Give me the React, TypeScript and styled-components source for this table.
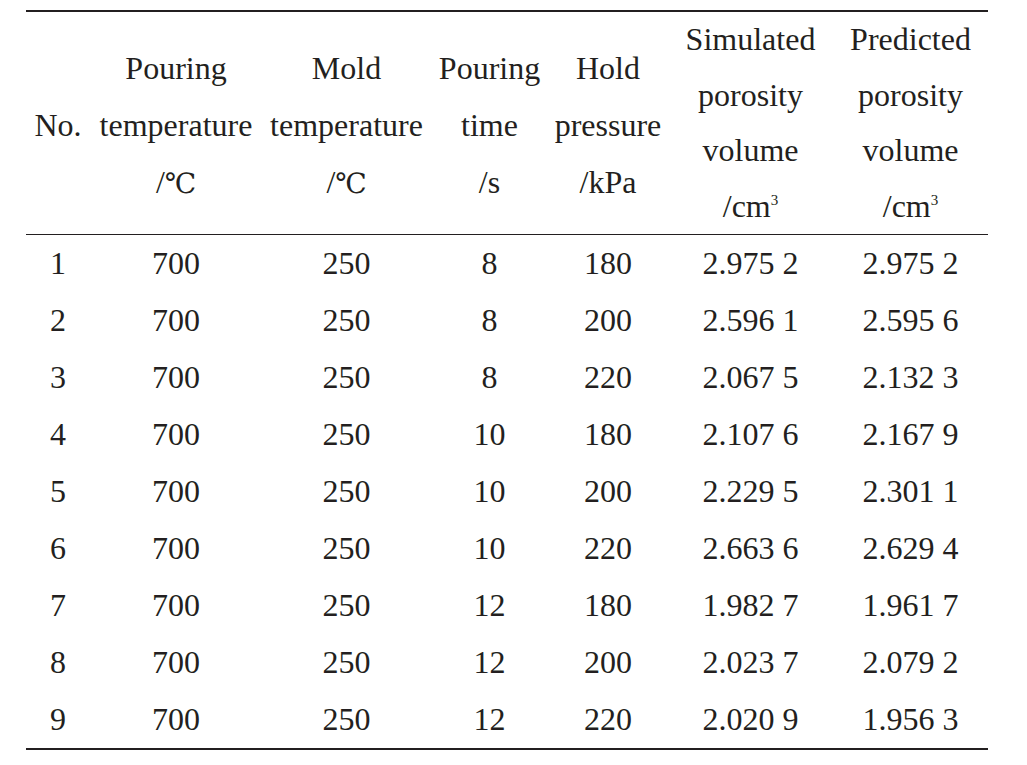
import React from 'react';
import styled, { createGlobalStyle } from 'styled-components';

const GlobalStyle = createGlobalStyle`
  body {
    margin: 0;
    background: #fff;
    color: #231f20;
    font-family: "Liberation Serif", "Times New Roman", serif;
  }
`;

const Page = styled.div`
  padding: 10px 0 0 26px;
`;

const Table = styled.table`
  width: 962px;
  table-layout: fixed;
  border-collapse: separate;
  border-spacing: 0;
  border-top: 2px solid #231f20;
  border-bottom: 2px solid #231f20;
  color: #231f20;
  font-family: "Liberation Serif", "DejaVu Serif", "Times New Roman", serif;
  font-size: 32px;
`;

const HeadCell = styled.th<{ $stacked?: boolean }>`
  font-weight: normal;
  padding: ${props => props.$stacked ? "0" : "5px 0 0"};
  line-height: ${props => props.$stacked ? "55.5px" : "57px"};
  border-bottom: 1px solid #231f20;
  text-align: center;
  vertical-align: middle;
  white-space: nowrap;
`;

const Line = styled.span`
  display: block;
`;

const Celsius = styled.span`
  font-family: "DejaVu Serif", "Liberation Serif", serif;
  font-size: 28px;
`;

const Sup = styled.sup`
  font-size: 15px;
  line-height: 0;
  vertical-align: 12px;
`;

const Cell = styled.td`
  padding: 0;
  line-height: 57px;
  text-align: center;
  white-space: nowrap;
`;

interface Column {
  width: number;
  lines: React.ReactNode[];
  stacked?: boolean;
}

const columns: Column[] = [
  { width: 64, lines: ["No."] },
  { width: 172, lines: ["Pouring", "temperature", <>/<Celsius>℃</Celsius></>] },
  { width: 169, lines: ["Mold", "temperature", <>/<Celsius>℃</Celsius></>] },
  { width: 117, lines: ["Pouring", "time", "/s"] },
  { width: 120, lines: ["Hold", "pressure", "/kPa"] },
  { width: 165, stacked: true, lines: ["Simulated", "porosity", "volume", <>/cm<Sup>3</Sup></>] },
  { width: 155, stacked: true, lines: ["Predicted", "porosity", "volume", <>/cm<Sup>3</Sup></>] },
];

const rows: string[][] = [
  ["1", "700", "250", "8", "180", "2.975 2", "2.975 2"],
  ["2", "700", "250", "8", "200", "2.596 1", "2.595 6"],
  ["3", "700", "250", "8", "220", "2.067 5", "2.132 3"],
  ["4", "700", "250", "10", "180", "2.107 6", "2.167 9"],
  ["5", "700", "250", "10", "200", "2.229 5", "2.301 1"],
  ["6", "700", "250", "10", "220", "2.663 6", "2.629 4"],
  ["7", "700", "250", "12", "180", "1.982 7", "1.961 7"],
  ["8", "700", "250", "12", "200", "2.023 7", "2.079 2"],
  ["9", "700", "250", "12", "220", "2.020 9", "1.956 3"],
];

export default function App() {
  return (
    <>
      <GlobalStyle />
      <Page>
        <Table>
          <colgroup>
            {columns.map((c, i) => <col key={i} style={{ width: c.width }} />)}
          </colgroup>
          <thead>
            <tr>
              {columns.map((c, i) => (
                <HeadCell key={i} $stacked={c.stacked}>
                  {c.lines.map((l, j) => <Line key={j}>{l}</Line>)}
                </HeadCell>
              ))}
            </tr>
          </thead>
          <tbody>
            {rows.map((r, i) => (
              <tr key={i}>
                {r.map((v, j) => <Cell key={j}>{v}</Cell>)}
              </tr>
            ))}
          </tbody>
        </Table>
      </Page>
    </>
  );
}
